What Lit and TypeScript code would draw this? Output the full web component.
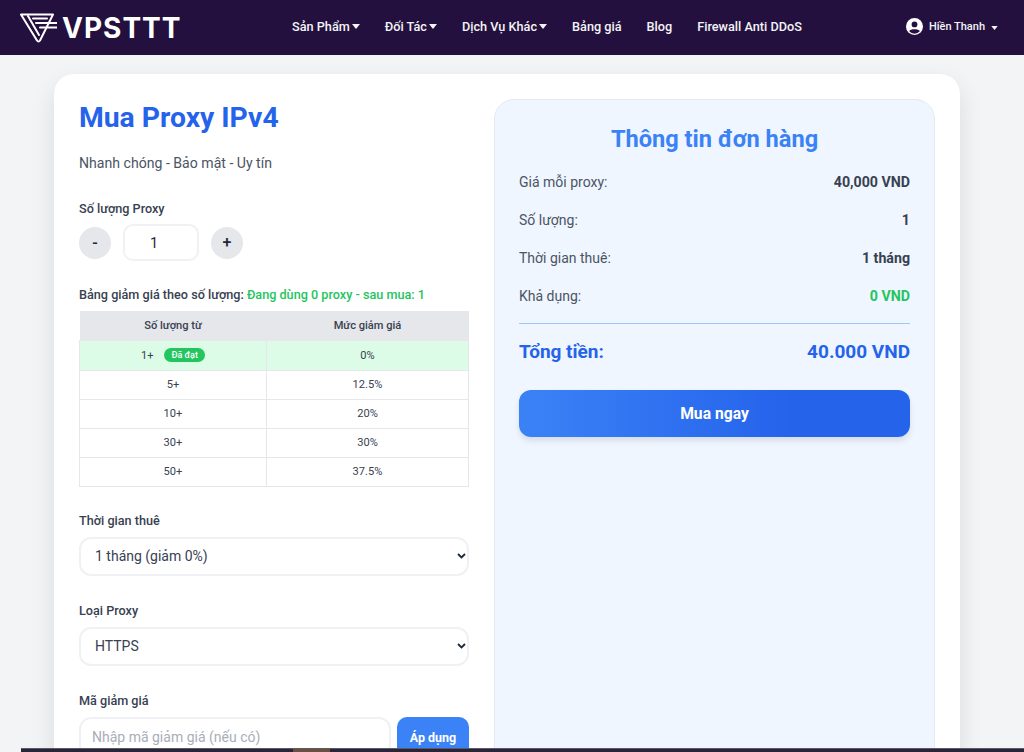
import { LitElement, html, css } from "lit";
import { customElement } from "lit/decorators.js";

const caret = html`<svg class="caret" viewBox="0 0 8 5"><path d="M0 0h8L4 5z" fill="currentColor"/></svg>`;
const chevron = html`<svg viewBox="0 0 9 6"><path d="M1 1l3.5 3.5L8 1" fill="none" stroke="#1f2937" stroke-width="1.8"/></svg>`;

@customElement("app-root")
export class AppRoot extends LitElement {
  static styles = css`
    :host { display: block; height: 752px; overflow: hidden; position: relative; background: #f3f4f6; font-family: Roboto, "Noto Sans", sans-serif; color: #374151; }
    * { box-sizing: border-box; }
    .nav { height: 55px; background: #24103e; color: #f3f4f6; display: flex; align-items: center; padding: 0 26px 0 20px; }
    .logo { display: flex; align-items: center; gap: 5px; width: 272px; flex: none; }
    .logo svg { width: 37px; height: 30px; flex: none; }
    .logo b { font: 700 28px/1 "Inter", sans-serif; color: #fff; letter-spacing: 1px; }
    .menu { display: flex; gap: 25px; font-size: 12.7px; font-weight: 500; flex: 1; padding-bottom: 2px; }
    .menu span { display: flex; align-items: center; gap: 2px; }
    .caret { width: 8px; height: 5px; }
    .user { display: flex; align-items: center; font-size: 11px; font-weight: 500; gap: 6px; padding-bottom: 2px; }
    .user .caret { width: 7px; height: 4px; margin-top: 2px; }
    .user svg.av { width: 17px; height: 17px; }
    .page { padding: 19px 64px 0 54px; }
    .card { height: 760px; background: #fff; border-radius: 20px; box-shadow: 0 10px 25px rgba(0,0,0,.1); display: grid; grid-template-columns: 390px 441px; column-gap: 25px; padding: 25px; }
    h1 { margin: 1px 0 0; color: #2563eb; font-size: 28.3px; font-weight: 700; line-height: 36px; }
    .sub { margin: 17px 0 0; font-size: 14.1px; line-height: 20px; color: #4b5563; }
    .left { display: flex; flex-direction: column; }
    label { display: block; font-size: 12.65px; font-weight: 500; line-height: 16px; color: #374151; }
    .qty-l { margin-top: 28px; }
    .qty { display: flex; align-items: center; margin-top: 7px; gap: 12px; }
    .rb { width: 32px; height: 32px; border-radius: 50%; background: #e5e7eb; display: flex; align-items: center; justify-content: center; font-size: 16px; font-weight: 500; color: #1f2937; }
    .qbox { width: 76px; height: 37px; border: 2px solid #f0f1f4; border-radius: 10px; display: flex; align-items: center; justify-content: center; font-size: 14.5px; color: #1f2937; padding: 2px 14px 0 0; }
    .dl { margin-top: 26px; }
    .green { color: #22c55e; }
    table { margin-top: 8px; width: 390px; border-collapse: collapse; font-size: 11.1px; table-layout: fixed; color: #374151; }
    th { background: #e5e7eb; height: 29px; font-weight: 500; border: none; }
    th:first-child { width: 187px; }
    td { height: 29px; text-align: center; border: 1px solid #e5e7eb; padding: 0; }
    tr.on td { background: #dcfce7; height: 30px; }
    .badge { display: inline-block; background: #22c55e; color: #fff; font-size: 9px; font-weight: 500; border-radius: 8px; padding: 0 7px; line-height: 14px; margin-left: 8px; vertical-align: 1px; }
    .f1 { margin-top: 26px; }
    .sel { margin-top: 8px; height: 39px; border: 2px solid #f0f1f4; border-radius: 12px; display: flex; align-items: center; justify-content: space-between; padding: 0 1px 0 14px; font-size: 14px; color: #374151; }
    .sel svg { width: 9px; height: 6px; }
    .f2 { margin-top: 27px; }
    .cp { margin-top: 8px; display: flex; gap: 6px; }
    .cp .in { width: 312px; height: 41px; border: 2px solid #f0f1f4; border-radius: 12px; padding: 0 11px; display: flex; align-items: center; font-size: 14px; color: #a9adb8; }
    .cp .go { width: 72px; height: 41px; background: #3b82f6; color: #fff; border-radius: 10px; display: flex; align-items: center; justify-content: center; font-size: 12.5px; font-weight: 700; }
    .right { background: #eff6ff; border: 1px solid #e5eaf2; border-radius: 20px; padding: 24px; height: 700px; }
    h2 { margin: 0 0 9px; text-align: center; color: #3b82f6; font-size: 23.6px; font-weight: 700; line-height: 30px; }
    .row { display: flex; justify-content: space-between; align-items: center; height: 38px; font-size: 14px; color: #4b5563; }
    .row b { font-weight: 700; font-size: 14.2px; color: #374151; }
    .row b.green { color: #22c55e; }
    .sep { height: 1px; background: #9cc8fb; margin-top: 8px; }
    .tot { display: flex; justify-content: space-between; margin-top: 16px; font-size: 19px; font-weight: 700; color: #2563eb; line-height: 24px; }
    .buy { margin-top: 26px; height: 47px; border-radius: 12px; background: linear-gradient(90deg,#3b82f6,#2563eb 70%); color: #fff; font-weight: 700; font-size: 15.7px; display: flex; align-items: center; justify-content: center; box-shadow: 0 4px 6px rgba(0,0,0,.1); }
    .strip { position: absolute; left: 21px; right: 0; bottom: 0; height: 4px; background: #2a2438; border-top: 1px solid #5c5868; }
    .strip i { position: absolute; left: 272px; top: 0; width: 37px; height: 3px; background: #6b5040; }
  `;

  render() {
    const rows = [["5+", "12.5%"], ["10+", "20%"], ["30+", "30%"], ["50+", "37.5%"]];
    return html`
      <div class="nav">
        <div class="logo">
          <svg viewBox="0 0 37 30" fill="none" stroke="#fff" stroke-width="2" stroke-linejoin="round" stroke-linecap="round">
            <path d="M1 1.5H33L20 27.5Q18.5 29.5 17 27.5Z"/>
            <path d="M8 3L19 22M13 5.5H27M16 10H37M20 14.5H37"/>
          </svg>
          <b>VPSTTT</b>
        </div>
        <div class="menu">
          <span>Sản Phẩm ${caret}</span><span>Đối Tác ${caret}</span><span>Dịch Vụ Khác ${caret}</span>
          <span>Bảng giá</span><span>Blog</span><span>Firewall Anti DDoS</span>
        </div>
        <div class="user">
          <svg class="av" viewBox="0 0 16 16"><circle cx="8" cy="8" r="8" fill="#fff"/><circle cx="8" cy="6" r="2.7" fill="#24103e"/><path d="M3 12.5c1-2.4 9-2.4 10 0A6.6 6.6 0 0 1 3 12.5z" fill="#24103e"/></svg>
          Hiền Thanh ${caret}
        </div>
      </div>
      <div class="page">
        <div class="card">
          <div class="left">
            <h1>Mua Proxy IPv4</h1>
            <p class="sub">Nhanh chóng - Bảo mật - Uy tín</p>
            <label class="qty-l">Số lượng Proxy</label>
            <div class="qty"><div class="rb">-</div><div class="qbox">1</div><div class="rb">+</div></div>
            <label class="dl">Bảng giảm giá theo số lượng: <span class="green">Đang dùng 0 proxy - sau mua: 1</span></label>
            <table>
              <thead><tr><th>Số lượng từ</th><th>Mức giảm giá</th></tr></thead>
              <tbody>
                <tr class="on"><td>1+ <span class="badge">Đã đạt</span></td><td>0%</td></tr>
                ${rows.map(r => html`<tr><td>${r[0]}</td><td>${r[1]}</td></tr>`)}
              </tbody>
            </table>
            <label class="f1">Thời gian thuê</label>
            <div class="sel">1 tháng (giảm 0%)${chevron}</div>
            <label class="f2">Loại Proxy</label>
            <div class="sel">HTTPS${chevron}</div>
            <label class="f2">Mã giảm giá</label>
            <div class="cp"><div class="in">Nhập mã giảm giá (nếu có)</div><div class="go">Áp dụng</div></div>
          </div>
          <div class="right">
            <h2>Thông tin đơn hàng</h2>
            <div class="row"><span>Giá mỗi proxy:</span><b>40,000 VND</b></div>
            <div class="row"><span>Số lượng:</span><b>1</b></div>
            <div class="row"><span>Thời gian thuê:</span><b>1 tháng</b></div>
            <div class="row"><span>Khả dụng:</span><b class="green">0 VND</b></div>
            <div class="sep"></div>
            <div class="tot"><span>Tổng tiền:</span><span>40.000 VND</span></div>
            <div class="buy">Mua ngay</div>
          </div>
        </div>
      </div>
      <div class="strip"><i></i></div>
    `;
  }
}
